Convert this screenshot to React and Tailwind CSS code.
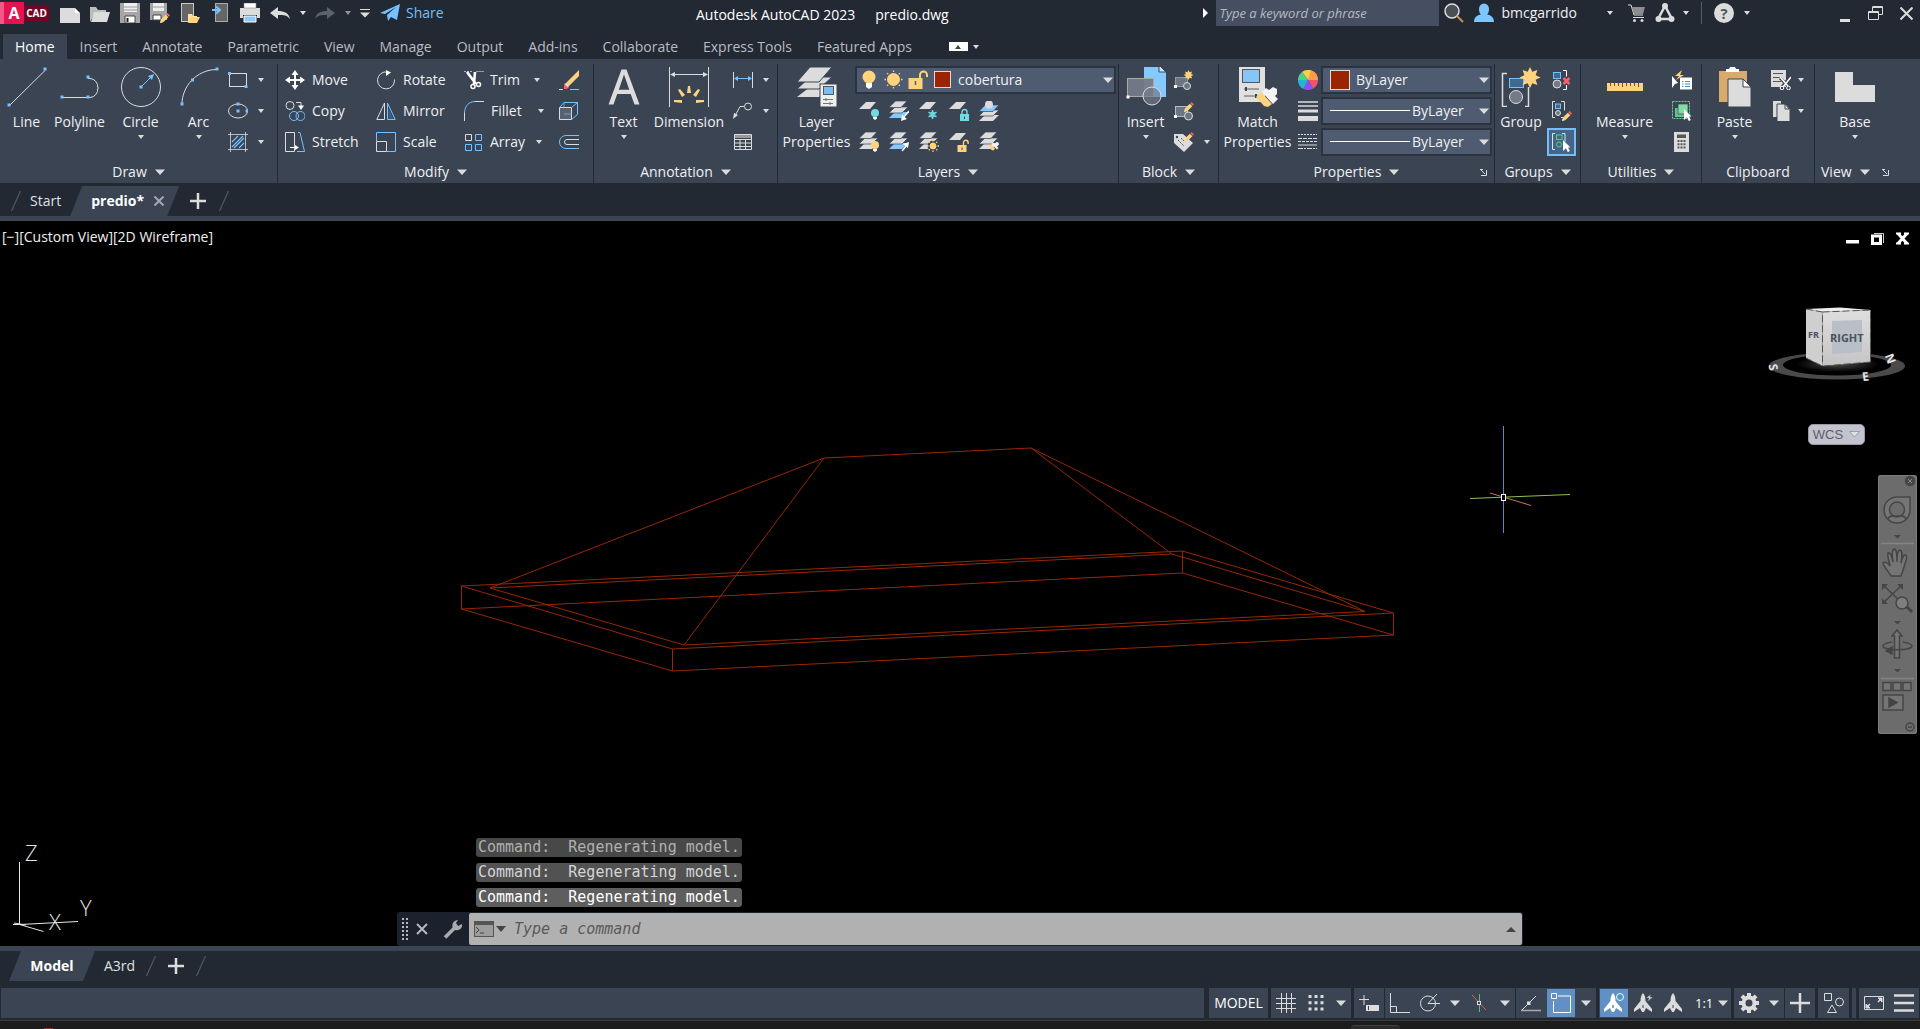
import React from "react";

const W = "#dcdcdc";
const B = "#76c1ff";
const Y = "#ffd37d";
const T = "#70dbe3";
const G = "#5fc98a";
const R = "#fb6161";

function Ico({ children, s = 20, className = "" }) {
  const size = s === 40 ? "h-10 w-10" : "h-5 w-5";
  return (
    <svg viewBox={s === 40 ? "0 0 40 40" : "0 0 20 20"} className={`${size} shrink-0 ${className}`} fill="none" stroke={W} strokeWidth="1" aria-hidden="true">
      {children}
    </svg>
  );
}

function Caret({ big = false, className = "" }) {
  return big ? (
    <svg viewBox="0 0 10 6" className={`h-[6px] w-[10px] shrink-0 ${className}`} aria-hidden="true"><path d="M0 .5h10L5 6z" fill={W} /></svg>
  ) : (
    <svg viewBox="0 0 6 4" className={`h-1 w-[6px] shrink-0 ${className}`} aria-hidden="true"><path d="M0 0h6L3 4z" fill={W} /></svg>
  );
}

const Dot = ({ x, y, c = B }) => <rect x={x - 1.5} y={y - 1.5} width="3" height="3" fill={c} stroke="none" />;

const Pencil = ({ x = 0, y = 0 }) => (
  <g transform={`translate(${x} ${y})`} stroke="none">
    <path d="M0 10l1-3.5 4.8-4.8 2.6 2.6L3.5 9z" fill={Y} />
    <path d="M0 10l.8-2.6 1.8 1.8z" fill={W} />
    <path d="M6.4 1.2L7.6 0l2.4 2.4-1.2 1.3z" fill={R} />
  </g>
);

const Bulb = ({ x, y, c = T }) => (
  <g transform={`translate(${x} ${y})`} stroke="none">
    <circle cx="4" cy="4" r="4" fill={c} />
    <path d="M2 8h4v1.5L4 11 2 9.500z" fill="#fff" />
  </g>
);

const Sheets = ({ last = W }) => (
  <g stroke="none">
    <path d="M6 11h13l-6 6H0z" fill={last} />
    <path d="M6 6h13l-6 6H0z" fill={W} stroke="#3b4453" strokeWidth=".7" />
    <path d="M6.500 0H18l-6 6.500H0z" fill={W} stroke="#3b4453" strokeWidth=".7" />
  </g>
);

const Sheet = () => <path d="M7 1h10l-6 7H0z" fill={W} stroke="none" />;

const SunShape = ({ x, y, r = 3, c = Y }) => (
  <g transform={`translate(${x} ${y})`} stroke={c}>
    <circle r={r} fill={c} />
    {[0, 45, 90, 135, 180, 225, 270, 315].map((a) => (
      <path key={a} d={`M0 ${-r - 1.5}V${-r - 3}`} transform={`rotate(${a})`} strokeWidth="1.3" />
    ))}
  </g>
);

const Burst = ({ x, y, r }) => {
  const pts = Array.from({ length: 16 }, (_, i) => {
    const q = i % 2 ? r * 0.58 : r;
    const a = (i * Math.PI) / 8;
    return `${x + q * Math.sin(a)},${y - q * Math.cos(a)}`;
  }).join(" ");
  return <polygon points={pts} fill={Y} stroke="none" />;
};

const Cursor = ({ x, y }) => <path transform={`translate(${x} ${y})`} d="M0 0l7.500 7.500H5l1.800 3.600-2 1L3 8.300 0 11z" fill="#fff" stroke="none" />;

const Padlock = ({ x, y, c, open }) => (
  <g transform={`translate(${x} ${y})`}>
    <path d={open ? "M6 5V2.500a2.300 2.300 0 0 1 4.600 0V4" : "M2 5V3a2.500 2.500 0 0 1 5 0v2"} stroke={c} strokeWidth="1.4" />
    <rect x="0" y="5" width="9" height="7" fill={c} stroke="none" />
    <path d="M4.500 7.500v2.500" stroke="#3b4453" />
  </g>
);

const Brush = ({ x, y, k = 1 }) => (
  <g transform={`translate(${x} ${y}) scale(${k})`} stroke="none">
    <path d="M0 8l4-4 8 9-3 4-4-1z" fill={Y} />
    <path d="M5 4l3-3 3 3 4-4 4 1 1 4-4 4 3 3-3 3z" fill="#f2f2f2" />
  </g>
);

/* ---------- quick access icons ---------- */
const quick = [
  ["New", <Ico><path d="M0 5h15v5h5v11H0z" fill={W} stroke="none" /><path d="M15 5l5 5h-5z" fill="#fff" stroke="none" /></Ico>],
  ["Open", <Ico><path d="M0 19V4h6l2 3h8v3H5z" fill="#bdbdbd" stroke="none" /><path d="M4 9h16l-3 10H1z" fill={W} stroke="none" /></Ico>],
  ["Save", <Ico><path d="M0 0h20v20H0z" fill="#a6a6a6" stroke="none" /><path d="M4 0h13v9H4z" fill="#eee" stroke="none" /><path d="M4 4h13M4 7h13" stroke="#999" /><path d="M5 13h10v7H5z" fill="#fff" stroke="#444" /><path d="M6.500 15h2v4h-2z" fill="#222" stroke="none" /></Ico>],
  ["Save As", <Ico><path d="M0 0h17v17H0z" fill="#a6a6a6" stroke="none" /><path d="M3 0h11v8H3z" fill="#eee" stroke="none" /><path d="M3 4h11" stroke="#999" /><path d="M3 12h8v5H3z" fill="#fff" stroke="#444" /><Pencil x={10} y={10} /></Ico>],
  ["Open from Web", <Ico><rect x="1.500" y=".5" width="12" height="18" fill="#666" stroke="#c9c9c9" /><path d="M8 19v-8h4l1 2h4v6z" fill="#ffe0a0" stroke="none" /><path d="M10 14h10l-3 6H8z" fill={Y} stroke="none" /></Ico>],
  ["Save to Web", <Ico><rect x="5.500" y=".5" width="12" height="18" fill="#666" stroke="#aaa" /><path d="M2 7h7M6 3.500L10 7l-4 3.500" stroke={B} strokeWidth="2" /></Ico>],
  ["Plot", <Ico><path d="M0 5h20v10h-3v-3H3v3H0z" fill={W} stroke="none" /><path d="M4 0h12v5H4z" fill="#fff" stroke="#888" strokeWidth=".6" /><path d="M4 13h12v6H4z" fill="#8ecbff" stroke="#fff" /></Ico>],
];

/* ---------- ribbon icons ---------- */
const icons = {
  line: <Ico s={40}><path d="M2 39L38.500 3" /><Dot x={2} y={38} /><Dot x={38} y={2} /></Ico>,
  polyline: <Ico s={40}><path d="M2 30.500h28a8 9.500 0 0 0 0-19h-2" /><Dot x={2} y={30} /><Dot x={28} y={30} /><Dot x={28} y={10} /></Ico>,
  circle: <Ico s={40}><circle cx="20" cy="20" r="19.500" /><path d="M20 20L31 9" stroke={B} /><path d="M33 7l-2 6-4-4z" fill={B} stroke="none" /><Dot x={20} y={20} /></Ico>,
  arc: <Ico s={40}><path d="M3 37C3 19 18 3 37 2.500" /><Dot x={3} y={37} /><Dot x={13.5} y={13} /><Dot x={38} y={2} /></Ico>,
  rect: <Ico><rect x="1.500" y="3.500" width="17" height="13" /><Dot x={1.5} y={3.5} /><Dot x={18} y={16.5} /></Ico>,
  ellipse: <Ico><ellipse cx="10" cy="10" rx="9.500" ry="7" /><Dot x={10} y={3} /><Dot x={10} y={10} /><Dot x={19} y={10} /></Ico>,
  hatch: <Ico><path d="M2.500 0v20M17.500 0v20M0 2.500h20M0 17.500h20" strokeWidth=".8" /><path d="M4 10l6-6M4 15L15 4M6 16L16 6M11 16l5-5" stroke={B} strokeWidth="1.200" /></Ico>,
  move: <Ico><path d="M10 3v14M3 10h14" stroke="#fff" strokeWidth="2" /><path d="M10 0l3.500 5h-7zM10 20l3.500-5h-7zM0 10l5-3.500v7zM20 10l-5-3.500v7z" fill="#fff" stroke="none" /></Ico>,
  copy: <Ico><circle cx="5" cy="4.500" r="4" /><path d="M11 1.500h5v5" /><path d="M13 4.500h6L16 9z" fill="#fff" stroke="none" /><circle cx="9" cy="15" r="4.500" stroke={B} /><circle cx="15.500" cy="15" r="4.500" stroke={B} /></Ico>,
  stretch: <Ico><path d="M.5.5h9v19h-9z" /><path d="M5 15.500h8" stroke="#fff" /><path d="M10 13l4 2.500-4 2.500z" fill="#fff" stroke="none" /><path d="M13 .5h2l4.500 19H12" stroke={B} /></Ico>,
  rotate: <Ico><path d="M18.500 9.500a8.500 8.500 0 1 1-7-7.500" /><path d="M10 0l5 2.500-5 3.500z" fill="#fff" stroke="none" /></Ico>,
  mirror: <Ico><path d="M8.500 2v16.500H.8z" /><path d="M11.500 2v16.500h7.700z" stroke={B} /><path d="M12.500 7v10.500H17z" fill="#35618c" stroke="none" /></Ico>,
  scale: <Ico><path d="M.5 9V.5h19v19H11" stroke={B} /><path d="M.5 9.500h10v10H.5z" /></Ico>,
  trim: <Ico><path d="M0 1.500h8" stroke={B} strokeDasharray="2 1" /><path d="M12 1.500h8" stroke="#999" /><path d="M3 2l9 12M11 2l-1 12" stroke="#fff" strokeWidth="2.600" /><circle cx="9" cy="16.500" r="2" stroke="#fff" strokeWidth="1.500" /><circle cx="14.500" cy="14.500" r="2" stroke="#fff" strokeWidth="1.500" /></Ico>,
  fillet: <Ico><path d="M.5 20V11" /><path d="M.5 12C.5 5 5 .5 11 .5" stroke={B} /><path d="M11 .5h9" /></Ico>,
  array: <Ico><path d="M1.500 2.500h6v6h-6z" /><path d="M11.500 2.500h6v6h-6zM1.500 12.500h6v6h-6zM11.500 12.500h6v6h-6z" stroke={B} /></Ico>,
  erase: <Ico><path d="M20 0v6L10 16l-3-3z" fill={Y} stroke="none" /><path d="M6 13l4 4-2 2H5v-4z" fill={R} stroke="none" /><path d="M9.500 16.500l-3-3" stroke="#fff" strokeWidth="1.500" /><path d="M0 19.500h4" /><path d="M11 19.500h9" stroke={B} /></Ico>,
  box: <Ico><path d="M.5 6.500h12v12H.5z" fill="#596171" /><path d="M.5 6.500L5 1.500h13.500v12l-6 5M12.500 6.500l6-5" stroke={B} /><path d="M5 2v5M5 13h8" stroke={B} strokeWidth=".7" /></Ico>,
  offset: <Ico><path d="M20 3.500H7a6.500 6.500 0 0 0 0 13h13" stroke={B} /><path d="M20 7.500H8a2.500 2.500 0 0 0 0 5h12" /></Ico>,
  text: <svg viewBox="0 0 40 40" className="h-10 w-10" aria-hidden="true"><path d="M4.500 37.500L17.500 2.500h5l13 35h-5L26.700 27H13.200L9.500 37.500zM14.800 22.800h10.500L20 7.500z" fill={W} fillRule="evenodd" /></svg>,
  dimension: <Ico s={40}><path d="M.5 0v40M39.500 0v40M2 7.500h36" /><path d="M1 7.500L6 5v5zM39 7.500L34 5v5z" fill={W} stroke="none" />
    <g fill={Y} stroke="none"><path d="M18 26l1-7h2l1 7zM5 33h8v3l-8-1zM35 33h-8v3l8-1zM9 23l2-1 5 6-3 2zM31 23l-2-1-5 6 3 2z" /></g></Ico>,
  linear: <Ico><path d="M.5 2v16M19.500 2v16" /><path d="M2 8.500h16" stroke={B} /><path d="M1 8.500L5 6v5zM19 8.500L15 6v5z" fill={B} stroke="none" /></Ico>,
  leader: <Ico><circle cx="15" cy="5.500" r="3.500" /><path d="M11 5.500H7L2 15" /><path d="M0 18l1-6 4 2z" fill={W} stroke="none" /></Ico>,
  table: <Ico><path d="M1.500 2.500h17v15h-17z" /><path d="M2 3h16v3H2z" fill="#999" stroke="none" /><path d="M1.500 7.500h17M1.500 11h17M1.500 14.500h17M7 7.500v10M12.500 7.500v10" /></Ico>,
  layerProps: <Ico s={40}><g stroke="none" fill={W}><path d="M13 20h22L22 30H0z" /><path d="M13 10h22L22 22H0z" stroke="#3b4453" /><path d="M13 0h22L22 15H0z" stroke="#3b4453" /></g><rect x="23" y="17" width="17" height="23" fill="#eee" stroke="#3b4453" /><rect x="26.500" y="19.500" width="10" height="8" fill="#78bdf6" stroke="#555" /><path d="M26 32.500h10M26 36.500h10M29 31v3M33 35v3" stroke="#777" /></Ico>,
  l1: <Ico><Sheet /><Bulb x={12} y={8} /></Ico>,
  l2: <Ico><Sheets last="#86c9ff" /><path d="M20 10l-6 7" stroke="#fff" strokeWidth="1.500" /><path d="M12 20l1-6 5 4z" fill="#fff" stroke="none" /></Ico>,
  l3: <Ico><Sheet /><g stroke={T} strokeWidth="1.500"><path d="M13.500 9v9M9.500 11.200l8 4.600M17.500 11.200l-8 4.600" /><circle cx="13.500" cy="13.500" r="2.500" strokeWidth="1" /></g></Ico>,
  l4: <Ico><Sheet /><Padlock x={11} y={8} c={T} /></Ico>,
  l5: <Ico><g stroke="none"><path d="M6 14h14l-6 6H0z" fill={W} /><path d="M6 9h14l-6 6H0z" fill={W} stroke="#3b4453" strokeWidth=".7" /><path d="M6 4h14l-6 6.500H0z" fill="#86c9ff" stroke="#3b4453" strokeWidth=".7" /><circle cx="10" cy="3.500" r="4" fill={W} /></g></Ico>,
  l6: <Ico><Sheets /><Bulb x={12} y={9} c={Y} /></Ico>,
  l7: <Ico><Sheets last="#86c9ff" /><path d="M13 19l5-6" stroke="#fff" strokeWidth="1.500" /><path d="M20 10l-6 2 5 4z" fill="#fff" stroke="none" /></Ico>,
  l8: <Ico><Sheets /><circle cx="14" cy="14" r="5.500" fill="#3b4453" stroke="none" /><SunShape x={14} y={14} r={3} /></Ico>,
  l9: <Ico><Sheet /><Padlock x={8.5} y={8} c={Y} open /></Ico>,
  l10: <Ico><Sheets /><Brush x={10} y={10} k={0.5} /></Ico>,
  insert: <Ico s={40}><path d="M18 -2h15l7 7v25H18z" fill="#86c9ff" stroke="none" /><path d="M33 -2v7h7z" fill="#c7e6ff" stroke="#3b4453" /><rect x="1.500" y="11.500" width="26" height="18" fill="#747b88" fillOpacity=".95" stroke="#aaa" /><circle cx="26" cy="29" r="9" fill="#747b88" fillOpacity=".7" /><Dot x={2} y={30} c="#fff" /></Ico>,
  createBlock: <Ico><rect x="1.500" y="7.500" width="12" height="9" fill="#6d7482" stroke="#999" /><circle cx="13" cy="16" r="3.500" fill="#6d7482" /><Dot x={1.5} y={16.5} c="#fff" /><Burst x={14.5} y={5} r={5} /></Ico>,
  editBlock: <Ico><rect x="1.500" y="5.500" width="12" height="10" fill="#6d7482" stroke="#bbb" /><circle cx="14.500" cy="15" r="4" fill="#6d7482" /><Dot x={1.5} y={15.5} c="#fff" /><Pencil x={10} y={1} /></Ico>,
  tag: <Ico><path d="M0 2h9l10 9-9 9L0 11z" fill={W} stroke="none" /><path d="M4 8l6 6M7 6l3 3" stroke="#555" strokeDasharray="2 1" /><circle cx="3" cy="5" r="1.200" fill="#3b4453" stroke="none" /><Pencil x={10} y={0} /></Ico>,
  match: <Ico s={40}><rect x="1" y="0" width="26" height="35" fill="#e0e0e0" stroke="none" /><rect x="4.500" y="2.500" width="17" height="13" fill="#86c5f8" stroke="#555" /><path d="M6 22h15M6 29h14" stroke="#888" strokeWidth="1.500" /><path d="M8 20v4M18 27v4" stroke="#444" strokeWidth="2" /><path d="M18 30l5-5 11 12-4 3-4-1z" fill={Y} stroke="none" /><path d="M24 25l4-4 3 2 4-3 4 2v5l-2 2 3 3-5 5z" fill="#f4f4f4" stroke="none" /></Ico>,
  wheel: <Ico><g stroke="none"><path d="M10 10V0a10 10 0 0 1 8.700 5z" fill="#ffb84d" /><path d="M10 10L4 2a10 10 0 0 1 9-1.500z" fill="#ffce4d" /><path d="M10 10l3-9.500A10 10 0 0 1 20 10z" fill="#ff9a4d" /><path d="M10 10h10a10 10 0 0 1-5 8.700z" fill="#ee5566" /><path d="M10 10l5 8.700a10 10 0 0 1-9.500.3z" fill="#8a4ff5" /><path d="M10 10l-4.500 9A10 10 0 0 1 0 10z" fill="#26b3d4" /><path d="M10 10H0a10 10 0 0 1 4-8z" fill="#4fd08a" /></g></Ico>,
  weights: <Ico><path d="M0 1h20M0 5h20" strokeWidth="1.500" /><path d="M0 10h20" strokeWidth="3" /><path d="M0 17.500h20" strokeWidth="5" /></Ico>,
  types: <Ico><path d="M0 2.500h19" strokeDasharray="2 1" /><path d="M0 6.500h19" strokeDasharray="4 1" /><path d="M0 9.500h19" strokeDasharray="3 1" /><path d="M0 13h19" /><path d="M0 16.500h19" strokeDasharray="5 1 2 1" /></Ico>,
  group: <Ico s={40}><path d="M6 6.500H1.500v33H6M24 39.500h3.500V20" strokeWidth="1.500" /><rect x="8.500" y="11.500" width="14" height="9" fill="#41688f" stroke={B} /><circle cx="15" cy="30" r="6.500" fill="#757b86" /><Burst x={29} y={10.5} r={10.5} /></Ico>,
  ungroup: <Ico><rect x="1.500" y="2.500" width="7" height="6" fill="#41688f" stroke={B} /><circle cx="5" cy="14" r="4" fill="#757b86" /><path d="M11 .5h3.500v6M11 19.500h3.500V15" stroke="#fff" /><path d="M11.500 8l6 6M17.500 8l-6 6" stroke={R} strokeWidth="2.500" /></Ico>,
  groupEdit: <Ico><path d="M3 .5H.5v16H3M9 .5h3.500v9M9 16.500h2" /><rect x="3.500" y="3" width="5" height="4.500" fill="#41688f" stroke={B} /><circle cx="6" cy="12" r="2.500" fill="#757b86" /><Pencil x={10} y={10} /></Ico>,
  groupSel: <Ico><path d="M3 1.500H.5v16H3M10 1.500h3v8" stroke="#cfe5ff" /><rect x="4.500" y="3" width="5.500" height="4.500" stroke={G} /><circle cx="7" cy="12.500" r="2.500" stroke={G} /><Cursor x={11} y={8} /></Ico>,
  measure: <Ico s={40}><rect x="2" y="16" width="36" height="8" fill={Y} stroke="none" /><path d="M5.500 16v3M9.500 16v3M13.500 16v3M17.500 16v4M21.500 16v3M25.500 16v3M29.500 16v3M33.500 16v4" stroke="#6b5a35" /></Ico>,
  quickSel: <Ico><rect x="8" y="7.500" width="12" height="12" fill="#fff" stroke="none" /><path d="M10 11.500h1.500M10 14h1.500M10 16.500h1.500M13 11.500h5M13 14h5M13 16.500h5" stroke="#4a8fd0" /><path d="M10 0L3 6h4L4 10l8-5H8z" fill={Y} stroke="none" /><path d="M0 6l6 7-3 1-3 4z" fill="#fff" stroke="none" /></Ico>,
  selAll: <Ico><rect x=".5" y=".5" width="17" height="17" stroke="#64d58e" strokeDasharray="2 1" /><rect x="3" y="7" width="9" height="9" fill="#64c48c" stroke="none" /><rect x="6" y="3" width="10" height="10" fill="#82dba4" stroke="#3b4453" strokeWidth=".7" /><Cursor x={12} y={8} /></Ico>,
  calc: <Ico><rect x="2" y="0" width="15" height="20" fill={W} stroke="none" /><rect x="5" y="2.500" width="9" height="3.500" fill="#555" stroke="none" /><path d="M6.500 8v10M9.500 8v10M12.500 8v10" stroke="#555" strokeWidth="2" strokeDasharray="2 1.300" /></Ico>,
  paste: <Ico s={40}><path d="M4 4h28v31H4z" fill="#d9aa6e" stroke="none" /><path d="M11 5V2h3l1-2h5l1 2h3v3z" fill="#fff" stroke="none" /><path d="M13 12h15l8 8v20H13z" fill={W} stroke="#3b4453" /><path d="M28 12v8h8z" fill="#fff" stroke="#3b4453" /></Ico>,
  cut: <Ico><path d="M0 0h15v17H0z" fill={W} stroke="none" /><path d="M2 3.500h10M2 7.500h8M2 11.500h8" stroke="#555" /><path d="M9 8l9 9M19 7l-8 10" stroke="#3b4453" strokeWidth="3" /><path d="M9 7l8 9M20 7l-8 10" stroke="#fff" strokeWidth="1.500" /><circle cx="11" cy="18" r="1.800" stroke="#fff" /><circle cx="17.500" cy="18" r="1.800" stroke="#fff" /></Ico>,
  copyClip: <Ico><path d="M2 0h8v16H2z" fill={W} stroke="none" /><path d="M6 3h9l4 5v13H6z" fill={W} stroke="#3b4453" /><path d="M14 3v5h4z" fill="#fff" stroke="#3b4453" /></Ico>,
  base: <Ico s={40}><path d="M0 5h18v13h22v17H0z" fill={W} stroke="none" /></Ico>,
};

/* ---------- ribbon building blocks ---------- */
function BigButton({ icon, label, width, caret, second }) {
  return (
    <button className={`flex h-full shrink-0 flex-col items-center pt-[3px] ${width}`}>
      {icons[icon]}
      <span className="mt-[5px] leading-5 whitespace-nowrap">{label}</span>
      {second && <span className="leading-5 whitespace-nowrap">{second}</span>}
      {caret && <Caret className="mt-[3px]" />}
    </button>
  );
}

function Tool({ icon, label, caret, gap = "gap-[7px]", selected, name }) {
  return (
    <span className="flex h-[31px] items-center">
      <button
        aria-label={label || name || icon}
        className={`flex items-center ${gap} ${selected ? "-ml-[5px] h-7 w-[29px] justify-center border-2 border-[#74bdf5] bg-[#466486]" : ""}`}
      >
        {icons[icon]}
        {label && <span>{label}</span>}
      </button>
      {caret && <button aria-label={`${label || name || icon} options`} className={caret}><Caret /></button>}
    </span>
  );
}

function Panel({ title, width, children, launcher, noCaret, titleAlign = "justify-center" }) {
  return (
    <section className={`flex shrink-0 flex-col border-r border-[#222933] ${width}`}>
      <div className="flex h-[93px]">{children}</div>
      <div className={`flex items-center gap-2 pt-1 leading-[22px] ${titleAlign}`}>
        <button className="flex items-center gap-2">
          {title}
          {!noCaret && <Caret big />}
        </button>
        {launcher && (
          <button aria-label={`${title} settings`} className={launcher === "far" ? "absolute right-2" : "ml-1"}>
            <svg viewBox="0 0 7 7" className="h-[7px] w-[7px]" fill="none" stroke={W}><path d="M0 .5h3M1 1l4 4M6.500 1v5.500H1" /></svg>
          </button>
        )}
      </div>
    </section>
  );
}

function Combo({ label, value, children, textClass }) {
  return (
    <div className="flex h-[31px] items-center">
      <div className="relative flex h-7 flex-1 items-center border-2 border-[#2b333f] bg-[#4e5b70]">
        {children}
        <select aria-label={label} className={`h-6 flex-1 appearance-none bg-transparent outline-none ${textClass}`}>
          <option>{value}</option>
        </select>
        <Caret big className="pointer-events-none absolute right-[1px]" />
      </div>
    </div>
  );
}

function Ribbon() {
  return (
    <div className="flex h-[124px] shrink-0 bg-[#3b4453] pt-[5px]">
      <Panel title="Draw" width="w-[278px]">
        <BigButton icon="line" label="Line" width="w-[53px]" />
        <BigButton icon="polyline" label="Polyline" width="w-[53px]" />
        <BigButton icon="circle" label="Circle" width="w-[69px]" caret />
        <BigButton icon="arc" label="Arc" width="w-[47px]" caret />
        <div className="flex flex-col pl-[6px]">
          <Tool icon="rect" name="Rectangle" caret="ml-[10px]" />
          <Tool icon="ellipse" name="Ellipse" caret="ml-[10px]" />
          <Tool icon="hatch" name="Hatch" caret="ml-[10px]" />
        </div>
      </Panel>
      <Panel title="Modify" width="w-[316px]">
        <div className="grid grid-cols-[91px_88px_95px_20px] pl-[7px]">
          <Tool icon="move" label="Move" />
          <Tool icon="rotate" label="Rotate" />
          <Tool icon="trim" label="Trim" gap="gap-[6px]" caret="ml-[14px]" />
          <Tool icon="erase" name="Erase" />
          <Tool icon="copy" label="Copy" />
          <Tool icon="mirror" label="Mirror" />
          <Tool icon="fillet" label="Fillet" caret="ml-4" />
          <Tool icon="box" name="Explode" />
          <Tool icon="stretch" label="Stretch" />
          <Tool icon="scale" label="Scale" />
          <Tool icon="array" label="Array" gap="gap-[6px]" caret="ml-[11px]" />
          <Tool icon="offset" name="Offset" />
        </div>
      </Panel>
      <Panel title="Annotation" width="w-[184px]">
        <BigButton icon="text" label="Text" width="w-[59px]" caret />
        <BigButton icon="dimension" label="Dimension" width="w-[72px]" />
        <div className="flex flex-col pl-2">
          <Tool icon="linear" name="Linear" caret="ml-[10px]" />
          <Tool icon="leader" name="Leader" caret="ml-[10px]" />
          <Tool icon="table" name="Table" />
        </div>
      </Panel>
      <Panel title="Layers" width="w-[341px]">
        <BigButton icon="layerProps" label="Layer" second="Properties" width="w-[77px]" />
        <div className="flex flex-1 flex-col pr-[2px]">
          <Combo label="Layer" value="cobertura" textClass="pl-[7px]">
            <svg viewBox="0 0 94 24" className="h-6 w-[94px] shrink-0" fill="none" aria-hidden="true">
              <circle cx="12" cy="9" r="6.500" fill={Y} /><path d="M9 15h6v4l-3 2-3-2z" fill="#fff" />
              <SunShape x={36.5} y={11.5} r={6} />
              <path d="M63 11V7a3.500 3.500 0 0 1 7 0v2" stroke={Y} strokeWidth="2" /><rect x="51.500" y="10" width="14" height="11" fill={Y} /><path d="M58.500 13v4" stroke="#4e5b70" strokeWidth="1.500" />
              <rect x="77.500" y="3.500" width="16" height="16" fill="#992600" stroke={W} />
            </svg>
          </Combo>
          <div className="grid grid-cols-[30px_30px_30px_30px_30px] pl-1">
            <Tool icon="l1" name="Layer Off" /><Tool icon="l2" name="Isolate" /><Tool icon="l3" name="Freeze" /><Tool icon="l4" name="Lock" /><Tool icon="l5" name="Make Current" />
            <Tool icon="l6" name="Turn All On" /><Tool icon="l7" name="Unisolate" /><Tool icon="l8" name="Thaw All" /><Tool icon="l9" name="Unlock" /><Tool icon="l10" name="Match Layer" />
          </div>
        </div>
      </Panel>
      <Panel title="Block" width="w-[100px]">
        <BigButton icon="insert" label="Insert" width="w-[53px]" caret />
        <div className="flex flex-col pl-[2px]">
          <Tool icon="createBlock" name="Create" />
          <Tool icon="editBlock" name="Edit" />
          <Tool icon="tag" name="Edit Attributes" caret="ml-[10px]" />
        </div>
      </Panel>
      <div className="relative flex shrink-0 [&_.absolute]:self-center">
        <Panel title="Properties" width="w-[276px]" launcher="far">
          <BigButton icon="match" label="Match" second="Properties" width="w-[77px]" />
          <div className="flex w-[25px] flex-col pl-[2px]">
            <Tool icon="wheel" name="Object Color" />
            <Tool icon="weights" name="Lineweight" />
            <Tool icon="types" name="Linetype" />
          </div>
          <div className="flex flex-1 flex-col pr-[2px]">
            <Combo label="Object color" value="ByLayer" textClass="pl-[6px]">
              <span className="ml-[7px] h-5 w-5 border border-[#dcdcdc] bg-[#992600]" />
            </Combo>
            <Combo label="Lineweight" value="ByLayer" textClass="pl-[2px]"><span className="ml-[7px] h-px w-20 bg-white" /></Combo>
            <Combo label="Linetype" value="ByLayer" textClass="pl-[2px]"><span className="ml-[7px] h-px w-20 bg-white" /></Combo>
          </div>
        </Panel>
      </div>
      <Panel title="Groups" width="w-[86px]">
        <BigButton icon="group" label="Group" width="w-[52px]" />
        <div className="flex flex-col pl-[5px]">
          <Tool icon="ungroup" name="Ungroup" />
          <Tool icon="groupEdit" name="Group Edit" />
          <Tool icon="groupSel" name="Group Selection" selected />
        </div>
      </Panel>
      <Panel title="Utilities" width="w-[121px]">
        <BigButton icon="measure" label="Measure" width="w-[87px]" caret />
        <div className="flex flex-col pl-1">
          <Tool icon="quickSel" name="Quick Select" />
          <Tool icon="selAll" name="Select All" />
          <Tool icon="calc" name="Quick Calculator" />
        </div>
      </Panel>
      <Panel title="Clipboard" width="w-[113px]" noCaret>
        <BigButton icon="paste" label="Paste" width="w-[65px]" caret />
        <div className="flex flex-col pl-1">
          <Tool icon="cut" name="Cut" caret="ml-[7px]" />
          <Tool icon="copyClip" name="Copy Clip" caret="ml-[7px]" />
        </div>
      </Panel>
      <Panel title="View" width="flex-1 border-r-0" launcher="near" titleAlign="pl-[6px]">
        <BigButton icon="base" label="Base" width="w-[80px]" caret />
      </Panel>
    </div>
  );
}

/* ---------- title bar ---------- */
function TitleBar() {
  return (
    <header className="flex h-[34px] shrink-0 items-start">
      <div className="flex h-[26px] w-[690px] shrink-0 items-center">
        <button aria-label="Application menu" className="flex w-[55px] items-center text-white">
          <span className="flex h-[22px] w-6 items-center justify-center border-l-4 border-[#f0588a] bg-[#e6114f] text-base font-bold">A</span>
          <span className="flex h-[15px] w-[25px] items-center justify-center bg-[#720425] text-[10px] font-bold">CAD</span>
        </button>
        {quick.map(([n, icon]) => (
          <button key={n} aria-label={n} className="flex w-[30px] justify-center">{icon}</button>
        ))}
        <button aria-label="Undo" className="flex w-[30px] justify-center"><Ico><path d="M0 10l8-6v4c6 0 11 2 12 8-3-4-6-4-12-4v4z" fill={W} stroke="none" /></Ico></button>
        <button aria-label="Undo history" className="flex w-[15px] justify-center"><Caret /></button>
        <button aria-label="Redo" className="flex w-[30px] justify-center"><Ico><path d="M20 10l-8-6v4C6 8 1 10 0 16c3-4 6-4 12-4v4z" fill="#5c626c" stroke="none" /></Ico></button>
        <button aria-label="Redo history" className="flex w-[15px] justify-center opacity-60"><Caret /></button>
        <button aria-label="Customize" className="flex w-5 justify-center"><svg viewBox="0 0 10 9" className="h-[9px] w-[10px]"><path d="M0 .5h10" stroke={W} /><path d="M0 3.500h10l-5 5z" fill={W} /></svg></button>
        <button className="ml-[5px] flex items-center gap-[6px] text-[#74c0f8]">
          <Ico><path d="M0 10L20 1l-3 16-6-3-3 4-1-6 9-8-11 7z" fill={B} stroke="none" /></Ico>Share
        </button>
      </div>
      <h1 className="flex h-[30px] flex-1 items-center gap-5 pl-[6px] whitespace-nowrap text-white"><span>Autodesk AutoCAD 2023</span><span>predio.dwg</span></h1>
      <div className="flex h-[26px] shrink-0 items-center">
        <button aria-label="Collapse search" className="mr-2"><svg viewBox="0 0 5 10" className="h-[10px] w-[5px]"><path d="M0 0l5 5-5 5z" fill="#fff" /></svg></button>
        <input aria-label="Search help" placeholder="Type a keyword or phrase" className="h-[26px] w-[223px] bg-[#464f61] px-[3px] text-[13px] italic outline-none placeholder:text-[#b6bac2]" />
        <button aria-label="Search" className="ml-[5px]"><Ico><circle cx="8" cy="8" r="7" fill="#4a4f58" strokeWidth="1.500" /><path d="M13 13l6 6" stroke="#c98f5a" strokeWidth="2" /></Ico></button>
        <button className="ml-[10px] flex items-center gap-[7px]">
          <Ico><path d="M5 6a5 5.500 0 0 1 10 0c0 3-1 5-2 5.500 4 .5 7 3 7 7.500H0c0-4.500 3-7 7-7.500C6 11 5 9 5 6z" fill="#7fc6ff" stroke="none" /></Ico>
          <span>bmcgarrido</span>
          <Caret className="ml-[23px]" />
        </button>
        <button aria-label="Store" className="ml-[14px]"><Ico><path d="M1 2h3l3 10h9" /><path d="M5 4h13l-2 7H7z" fill="#8d8d8d" stroke="none" /><path d="M6 14.500h11" /><circle cx="7.500" cy="17.500" r="1.500" fill={W} stroke="none" /><circle cx="15" cy="17.500" r="1.500" fill={W} stroke="none" /></Ico></button>
        <button aria-label="Autodesk apps" className="ml-2 flex items-center gap-2"><Ico><path d="M10 3L3 16h14z" strokeWidth="2.500" /><g fill={W} stroke="none"><circle cx="10" cy="3" r="3" /><circle cx="3.500" cy="16" r="3" /><circle cx="16.500" cy="16" r="3" /></g></Ico><Caret /></button>
        <span className="mr-3 ml-3 h-[22px] w-px bg-[#555d6b]" />
        <button aria-label="Help" className="flex items-center gap-[10px]">
          <span className="flex h-5 w-5 items-center justify-center rounded-full bg-[#dcdcdc] text-[15px] font-bold text-[#555]">?</span><Caret />
        </button>
        <button aria-label="Minimize" className="ml-[90px] h-5 w-[10px]"><span className="mt-[14px] block h-[3px] w-[10px] bg-[#e0e0e0]" /></button>
        <button aria-label="Restore" className="ml-[18px]"><svg viewBox="0 0 15 14" className="h-[14px] w-[15px]" fill="none" stroke={W}><path d="M4.500 5V1h10v7.500H11" /><path d="M4.500 1h10" strokeWidth="2" /><path d="M.5 5.500h10v8H.5z" /><path d="M.5 6h10" strokeWidth="2" /></svg></button>
        <button aria-label="Close" className="mr-[7px] ml-[17px]"><svg viewBox="0 0 13 13" className="h-[13px] w-[13px]"><path d="M.5.5l12 12M12.500.5l-12 12" stroke={W} strokeWidth="2" /></svg></button>
      </div>
    </header>
  );
}

function RibbonTabs() {
  const tabs = ["Home", "Insert", "Annotate", "Parametric", "View", "Manage", "Output", "Add-ins", "Collaborate", "Express Tools", "Featured Apps"];
  return (
    <nav className="flex h-[25px] shrink-0 gap-px pl-[3px]">
      {tabs.map((t, i) => (
        <button key={t} className={i === 0 ? "bg-[#3b4453] px-3 text-white" : "px-3 text-[#b9bcc2]"}>{t}</button>
      ))}
      <button aria-label="Minimize ribbon" className="ml-6 flex items-center gap-[5px]">
        <span className="flex h-[9px] w-[19px] items-center justify-center bg-white"><svg viewBox="0 0 6 4" className="h-1 w-[6px]"><path d="M0 4h6L3 0z" fill="#444" /></svg></span>
        <Caret />
      </button>
    </nav>
  );
}

const Slash = () => <svg viewBox="0 0 10 20" className="h-5 w-[10px] shrink-0"><path d="M.5 20L9.500 0" stroke="#515a68" strokeWidth="1.200" /></svg>;
const Plus = () => <svg viewBox="0 0 16 16" className="h-4 w-4"><path d="M0 8h16M8 0v16" stroke={W} strokeWidth="2.500" /></svg>;

function FileTabs() {
  return (
    <nav className="flex h-[38px] shrink-0 border-b-[5px] border-[#3b4453] pl-[11px]">
      <div className="flex items-center pt-[3px]">
        <Slash />
        <button className="ml-[9px] text-[#dfe1e4]">Start</button>
      </div>
      <div className="mt-[3px] ml-[9px] flex w-[109px] items-center bg-[#3b4453] pl-[21px] [clip-path:polygon(12px_0,100%_0,97px_100%,0_100%)]">
        <button className="font-bold text-white">predio*</button>
        <button aria-label="Close predio" className="ml-[10px]"><svg viewBox="0 0 10 10" className="h-[10px] w-[10px]"><path d="M.5.5l9 9M9.500.5l-9 9" stroke="#a3a8b0" strokeWidth="2" /></svg></button>
      </div>
      <div className="flex items-center pt-[3px] pl-[11px]">
        <button aria-label="New drawing" className="mr-[13px]"><Plus /></button>
        <Slash />
      </div>
    </nav>
  );
}

/* ---------- drawing area ---------- */
function Drawing() {
  return (
    <svg className="absolute inset-0 h-full w-full" fill="none" aria-label="Wireframe roof">
      <g stroke="#992600" strokeWidth="1">
        <path d="M461.500 365L1182.500 330L1393.500 392L672.500 428z" />
        <path d="M461.500 388L1182.500 352L1393.500 414L672.500 450z" />
        <path d="M461.500 365v23M672.500 428v22M1393.500 392v22M1182.500 330v22" />
        <path d="M490 367L1172 333L1365 390.500L684 424z" />
        <path d="M490 367L824 237L1031 227L1365 390.500M684 424L824 237M1031 227L1172 333" />
      </g>
      <path d="M1503.500 205v107" stroke="#4f8fc4" />
      <path d="M1470 277.500l100-4" stroke="#8bc34a" />
      <path d="M1490 272l41 12.500" stroke="#c97456" />
      <rect x="1501.500" y="273.500" width="4" height="6" fill="#000" stroke="#fff" />
      <g stroke="#e6e6e6">
        <path d="M19.500 641v62M13 703.500h7l58-3M19.500 703.500l24 7M14 702l12 2" />
      </g>
      <g fill="#e6e6e6" className="text-[22px] font-light">
        <text x="25" y="640">Z</text><text x="80" y="695">Y</text><text x="49" y="709">X</text>
      </g>
    </svg>
  );
}

function ViewCube() {
  return (
    <div className="absolute top-[79px] right-[12px] flex flex-col items-center">
      <svg viewBox="1760 300 148 84" className="h-[84px] w-[148px]" aria-label="View cube">
        <defs>
          <linearGradient id="faceR" x1="0" y1="0" x2="0" y2="1"><stop offset="0" stopColor="#dedede" /><stop offset="1" stopColor="#c4c4c4" /></linearGradient>
          <radialGradient id="shade"><stop offset="0" stopColor="#4a4a4a" /><stop offset="1" stopColor="#000" /></radialGradient>
        </defs>
        <path fillRule="evenodd" fill="#4a4a4a" d="M1769 366a68 13.500 0 1 0 136 0a68 13.500 0 1 0-136 0zM1783 365a54 10.500 0 1 0 108 0a54 10.500 0 1 0-108 0z" />
        <ellipse cx="1838" cy="364" rx="42" ry="8" fill="url(#shade)" />
        <path d="M1806 309l16.500 3v54l-16.500-8z" fill="#cfcfcf" />
        <path d="M1822.500 312l48-2v52l-48 4z" fill="url(#faceR)" />
        <path d="M1806 309l34-1.500 30.500 2.500-48 2z" fill="#efefef" />
        <path d="M1806 309l16.500 3v54M1822.500 312l48-2v52l-48 4-16.500-8" fill="none" stroke="#555" strokeDasharray="7 3" />
        <path d="M1832 321l30-1v32l-30 2z" fill="#b9bfc6" />
        <text x="1830" y="342" className="text-[11px] font-bold" fill="#4a525e">RIGHT</text>
        <text x="1808" y="338" className="text-[9px] font-bold" fill="#4a525e">FR</text>
        <g fill="#e4e4e4" className="text-[12px] font-bold">
          <text transform="rotate(80 1773 367)" x="1770" y="371">S</text>
          <text transform="rotate(-8 1865 376)" x="1862" y="381">E</text>
          <text transform="rotate(70 1890 358)" x="1886" y="362">N</text>
        </g>
      </svg>
      <button className="mt-10 ml-[5px] flex h-[21px] w-[57px] items-center justify-center gap-[6px] rounded-[5px] border border-[#9a9aa6] bg-[#c3c3d0] text-[13px] text-[#5d5d66] [font-family:'Liberation_Sans',sans-serif]">
        WCS
        <svg viewBox="0 0 11 7" className="h-[7px] w-[11px]"><path d="M.5.5h10l-5 5.500z" fill="#d7e3e3" stroke="#8fa3a8" /></svg>
      </button>
    </div>
  );
}

function NavBar() {
  const s = "#454545";
  return (
    <div className="absolute top-[254px] right-[3px] h-[259px] w-[39px] rounded-[3px] bg-[#6c6c6c] ring-1 ring-[#7d7d7d] ring-inset">
      <svg viewBox="0 0 39 259" className="h-full w-full" fill="none" stroke={s} strokeWidth="1.500" aria-label="Navigation bar">
        <circle cx="32" cy="6" r="4.500" fill={s} /><path d="M30 4l4 4M34 4l-4 4" stroke="#888" strokeWidth="1" />
        <path d="M19 22h13v13a13 13 0 1 1-13-13z" fill="#757575" /><circle cx="19" cy="34.500" r="7.500" fill="#6c6c6c" /><path d="M10 44c1-4 5-3 9-3s8-1 9 3" />
        <g fill={s} stroke="none"><path d="M16 60h7l-3.500 3.500zM16 146h7l-3.500 3.500zM16 194h7l-3.500 3.500z" /></g>
        <path d="M3 68.500h33M3 203.500h33" stroke="#838383" />
        <path d="M13 101C10 96 6 92 5 88c2-2 5 0 7 3-1-5-3-10-2-13 2-1 4 3 5 9-1-6-1-12 1-13 3 0 3 6 3 13 0-6 1-12 3-12 3 1 2 7 1 13 1-5 3-9 5-8 2 2-1 8-2 12-1 4-2 5-3 9z" fill="#757575" />
        <path d="M6 111l17 16M23 111L6 127" /><path d="M4 109h6l-6 6zM25 109h-6l6 6zM4 129v-6l6 6z" fill={s} stroke="none" />
        <circle cx="24" cy="128" r="6" fill="#7e7e7e" /><path d="M29 132l5 5" strokeWidth="3" />
        <path d="M19 155l5 6h-2.500v22h-5v-22H14z" fill="#757575" /><path d="M14 167c-6 1-9 2-9 4 0 5 29 5 29 0 0-2-4-3-9-4" /><path d="M8 176l6-4v7z" fill={s} />
        <path d="M5 207.500h8v8H5zM15 207.500h8v8h-8zM25 207.500h8v8h-8zM5 220h20v15H5z" fill="#757575" /><path d="M11 223v9l8-4.500z" fill={s} />
        <circle cx="32" cy="252" r="4" /><path d="M30 252h4" />
      </svg>
    </div>
  );
}

function CommandLine() {
  return (
    <div className="absolute inset-x-[397px] bottom-0 text-[15px] [font-family:'DejaVu_Sans_Mono',monospace]">
      <div className="mb-[5px] ml-[79px] flex flex-col items-start gap-[6px] leading-[19px] whitespace-pre">
        <span className="rounded-[3px] bg-[#484848] px-[2px] text-[#b0b0b0]">Command:  Regenerating model.</span>
        <span className="rounded-[3px] bg-[#525252] px-[2px] text-[#d5d5d5]">Command:  Regenerating model.</span>
        <span className="rounded-[3px] bg-[#5e5e5e] px-[2px] text-white">Command:  Regenerating model.</span>
      </div>
      <div className="flex h-[34px] items-center rounded-[3px] bg-[#1c222d] p-px">
        <div className="flex w-[71px] items-center pl-1">
          <svg viewBox="0 0 6 22" className="h-[22px] w-[6px]"><path d="M1 0v22M5 0v22" stroke="#b5b8bd" strokeWidth="2" strokeDasharray="2 2" /></svg>
          <button aria-label="Close command line" className="ml-[8px]"><svg viewBox="0 0 12 12" className="h-3 w-3"><path d="M1 1l10 10M11 1L1 11" stroke="#b5b8bd" strokeWidth="2" /></svg></button>
          <button aria-label="Customize command line" className="ml-[15px]"><Ico><path d="M2 18.500L11.500 9" stroke="#a8abb0" strokeWidth="3.500" /><path d="M10 9C8 5 11 1 15 1l-2 3 2 3 4-2c1 4-3 7-7 6z" fill="#a8abb0" stroke="none" /></Ico></button>
        </div>
        <div className="flex h-8 flex-1 items-center rounded-[2px] bg-[#b1b1b1] pl-[5px]">
          <button aria-label="Recent commands" className="flex items-center gap-[2px]">
            <svg viewBox="0 0 20 16" className="h-4 w-5" fill="none"><rect x=".5" y=".5" width="19" height="15" fill="#9c9c9c" stroke="#555" /><path d="M0 0h20v4H0z" fill="#555" /><path d="M2 6l3 3-3 3M6 12h4" stroke="#444" /></svg>
            <svg viewBox="0 0 10 6" className="h-[6px] w-[10px]"><path d="M0 0h10L5 6z" fill="#444" /></svg>
          </button>
          <input aria-label="Command" placeholder="Type a command" className="ml-2 h-8 flex-1 bg-transparent italic outline-none placeholder:text-[#5a5a5a]" />
          <button aria-label="Command history" className="mr-[6px]"><svg viewBox="0 0 10 5" className="h-[5px] w-[10px]"><path d="M0 5h10L5 0z" fill="#444" /></svg></button>
        </div>
      </div>
    </div>
  );
}

function Canvas() {
  return (
    <main className="relative min-h-0 flex-1 overflow-hidden bg-black">
      <Drawing />
      <p className="absolute top-[5px] left-[2px] leading-[22px] text-[#f0f0f0]">[−][Custom View][2D Wireframe]</p>
      <div className="absolute top-[11px] right-[11px] flex items-center gap-3">
        <button aria-label="Minimize drawing"><svg viewBox="0 0 13 13" className="h-[13px] w-[13px]"><path d="M0 8h13v3.500H0z" fill="#fff" /></svg></button>
        <button aria-label="Restore drawing"><svg viewBox="0 0 13 13" className="h-[13px] w-[13px]" fill="none"><path d="M3 1.500h9.500V11" stroke="#ccc" /><path d="M1.500 4h8v7.500h-8z" stroke="#fff" strokeWidth="3" /></svg></button>
        <button aria-label="Close drawing"><svg viewBox="0 0 13 13" className="h-[13px] w-[13px]"><path d="M2 1.500l9 10M11 1.500l-9 10" stroke="#fff" strokeWidth="3" /><path d="M0 1.500h5M8 1.500h5M0 11.500h5M8 11.500h5" stroke="#fff" strokeWidth="2" /></svg></button>
      </div>
      <ViewCube />
      <NavBar />
      <CommandLine />
    </main>
  );
}

function LayoutTabs() {
  return (
    <nav className="flex h-[42px] shrink-0 items-start border-t-[5px] border-[#3b4453] pl-[9px]">
      <button className="h-[30px] w-[86px] bg-[#3b4453] font-bold text-white [clip-path:polygon(12px_0,100%_0,74px_100%,0_100%)]">Model</button>
      <div className="flex h-[30px] items-center pl-[9px]">
        <button className="mr-[11px] text-[#dfe1e4]">A3rd</button>
        <Slash />
        <button aria-label="New layout" className="mx-[12px]"><Plus /></button>
        <Slash />
      </div>
    </nav>
  );
}

/* ---------- status bar ---------- */
const Seg = ({ children, className = "" }) => <div className={`flex h-[30px] shrink-0 items-center bg-[#3b4453] ${className}`}>{children}</div>;

function SB({ name, children, on, className = "" }) {
  return (
    <button aria-label={name} aria-pressed={!!on} className={`flex h-7 items-center justify-center ${on ? "w-7 bg-[#6191c4]" : ""} ${className}`}>{children}</button>
  );
}

const Annot = ({ c = W, children }) => (
  <Ico><path d="M9 0c2 2 2.500 5 2.500 8L18 16v3l-6-4-2 4H8l-2-4-6 4v-3l6.500-8C6.500 5 7 2 9 0z" fill={c} stroke="none" /><path d="M9 12v3" stroke="#3b4453" />{children}</Ico>
);

function StatusBar() {
  return (
    <footer className="flex h-[30px] shrink-0 pr-px pl-px">
      <div className="mr-[5px] h-full flex-1 bg-[#3b4453]" />
      <Seg className="mr-[3px] w-[59px] justify-center"><button className="text-white">MODEL</button></Seg>
      <Seg className="mr-[3px] w-20 pl-[5px]">
        <SB name="Grid"><Ico><path d="M5.500 0v20M10.500 0v20M15.500 0v20M0 5.500h20M0 10.500h20M0 15.500h20" /></Ico></SB>
        <SB name="Snap" className="ml-[10px]"><Ico><path d="M4 2v16M10 2v16M16 2v16" stroke={W} strokeWidth="3" strokeDasharray="3 3.300" /></Ico></SB>
        <SB name="Snap options" className="ml-[10px]"><Caret big /></SB>
      </Seg>
      <Seg className="mr-px w-[30px] justify-center"><SB name="Dynamic input"><Ico><path d="M0 6.500h10M5 2v10" /><path d="M7 12h13v6H7z" fill={W} stroke="none" /><path d="M9.500 13v4" stroke="#3b4453" /></Ico></SB></Seg>
      <Seg className="mr-px w-[130px] pl-[5px]">
        <SB name="Ortho"><Ico><path d="M.5 0v19.500H20M.5 13.500h6v6" /></Ico></SB>
        <SB name="Polar" className="ml-[10px]"><Ico><circle cx="8" cy="10.500" r="7.500" /><path d="M8 10.500h12M8 10.500L17 1" /></Ico></SB>
        <SB name="Polar options" className="ml-[10px]"><Caret big /></SB>
        <SB name="Isometric" className="ml-[9px]"><Ico><path d="M3 2l14 15" stroke="#d9656b" /><path d="M10.500 1v18" stroke="#4fc07f" /><rect x="8.500" y="8.500" width="3" height="3" fill="#3b4453" /></Ico></SB>
        <SB name="Isometric options" className="ml-[11px]"><Caret big /></SB>
      </Seg>
      <Seg className="mr-[3px] w-20 pl-[5px]">
        <SB name="Object snap tracking"><Ico><path d="M0 17.500h20" stroke="#aaa" strokeWidth="1.500" /><path d="M1 17L15 3" /><rect x="6" y="8.500" width="3.500" height="3.500" fill={W} stroke="none" /></Ico></SB>
        <SB name="Object snap" on className="ml-[6px]"><Ico><path d="M7 3h12.500v16.500h-17V8" stroke="#fff" /><path d="M.5.5h5v5h-5z" stroke="#fff" /></Ico></SB>
        <SB name="Object snap options" className="ml-[6px]"><Caret big /></SB>
      </Seg>
      <Seg className="mr-[3px] w-[132px] pl-px">
        <SB name="Annotation visibility" on><Annot c="#fff"><circle cx="16" cy="4" r="3.500" stroke="#dff" /></Annot></SB>
        <SB name="Auto scale" className="ml-[6px]"><Annot><path d="M17 1l-5 4h3l-2 4 6-5h-3z" fill={W} stroke="#3b4453" strokeWidth=".5" /></Annot></SB>
        <SB name="Annotation scale" className="ml-[10px]"><Annot /></SB>
        <button className="ml-[11px] flex items-center gap-[5px] text-[13px] text-white">1:1<Caret big /></button>
      </Seg>
      <Seg className="mr-px w-[50px] pl-[5px]">
        <SB name="Workspace"><Ico>
          <circle cx="10" cy="10" r="5.500" stroke={W} strokeWidth="4" />
          {[0, 45, 90, 135, 180, 225, 270, 315].map((a) => <path key={a} d="M8 0h4v4H8z" fill={W} stroke="none" transform={`rotate(${a} 10 10)`} />)}
        </Ico></SB>
        <SB name="Workspace options" className="ml-[10px]"><Caret big /></SB>
      </Seg>
      <Seg className="mr-[3px] w-[30px] justify-center"><SB name="Annotation monitor"><Ico><path d="M0 10h20M10 0v20" strokeWidth="2.500" /></Ico></SB></Seg>
      <Seg className="mr-[3px] w-[31px] justify-center"><SB name="Isolate objects"><Ico><path d="M.5.500h7v7h-7zM8 12l4.500 7.500h-9z" /><circle cx="15.500" cy="9" r="4" /></Ico></SB></Seg>
      <Seg className="mr-[3px] w-1" />
      <Seg className="w-[60px] gap-[10px] pl-[5px]">
        <SB name="Clean screen"><Ico><path d="M.5 3.500h19v13H.5z" /><path d="M14 5h4v4zM2 11v4h4z" fill={W} stroke={W} /><path d="M17 6l-3 3M3 14l3-3" strokeWidth="1.500" /></Ico></SB>
        <SB name="Customization"><Ico><path d="M0 2.500h20M0 10h20M0 17.500h20" strokeWidth="2.500" /></Ico></SB>
      </Seg>
    </footer>
  );
}

export default function App() {
  return (
    <div className="flex h-screen flex-col overflow-hidden bg-[#222933] text-[14px] leading-5 text-[#eef0f2] [font-family:'Open_Sans',sans-serif]">
      <TitleBar />
      <RibbonTabs />
      <Ribbon />
      <FileTabs />
      <Canvas />
      <LayoutTabs />
      <StatusBar />
      <div className="mt-[2px] flex h-[9px] shrink-0 items-end border-t border-[#3d3d3d] bg-[#1c1c1c]">
        <span className="ml-[44px] h-px w-[9px] bg-[#a32a22]" />
        <span className="ml-[1298px] h-1 w-[49px] rounded-t-[4px] border-t border-[#3f3f3f] bg-[#2b2b2b]" />
      </div>
    </div>
  );
}
